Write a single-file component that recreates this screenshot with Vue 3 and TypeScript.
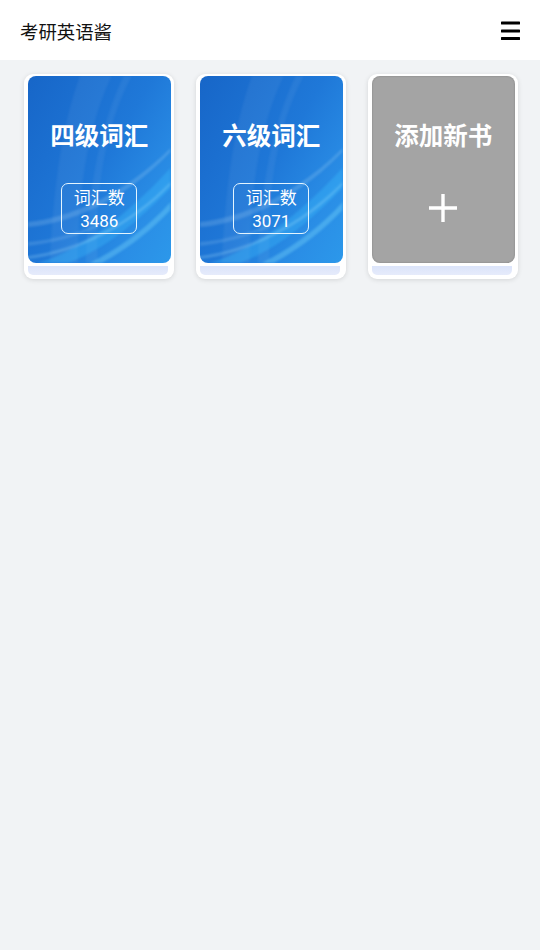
<script setup lang="ts">
const books = [
  { title: '四级词汇', count: 3486 },
  { title: '六级词汇', count: 3071 },
]
</script>

<template>
  <div class="page">
    <header class="bar">
      <span class="brand">考研英语酱</span>
      <svg class="menu" width="19" height="20" viewBox="0 0 19 20">
        <path d="M1 2H18M1 10H18M1 17.5H18" stroke="#000" stroke-width="3.2" stroke-linecap="round" fill="none" />
      </svg>
    </header>
    <main class="shelf">
      <article v-for="b in books" :key="b.title" class="book">
        <div class="cover blue">
          <svg class="streaks" viewBox="0 0 143 187" preserveAspectRatio="none">
            <path d="M52 0C36 45 26 100 22 187H70C66 110 80 45 104 0H96C74 45 60 110 58 187H50C50 110 62 45 84 0Z" fill="#fff" opacity=".05" />
            <path d="M10 187C60 172 108 130 143 92V112C110 146 76 174 40 187Z" fill="#3fc4ff" opacity=".3" />
            <path d="M62 187C92 172 122 150 143 126V134C122 156 98 174 74 187Z" fill="#8ce8ff" opacity=".3" />
            <path d="M0 146C40 142 95 120 143 72V76C95 126 40 148 0 151Z" fill="#dff6ff" opacity=".16" />
            <path d="M0 166C24 164 48 158 70 148V151C48 161 24 167 0 170Z" fill="#dff6ff" opacity=".14" />
            <path d="M0 180C50 174 104 146 143 106V109C104 150 50 177 0 183Z" fill="#bdf0ff" opacity=".22" />
          </svg>
          <h2 class="title">{{ b.title }}</h2>
          <div class="stat">
            <span>词汇数</span>
            <span class="num">{{ b.count }}</span>
          </div>
        </div>
        <div class="edge"></div>
      </article>
      <article class="book">
        <div class="cover grey">
          <h2 class="title">添加新书</h2>
          <svg class="plus" width="30" height="30" viewBox="0 0 30 30">
            <path d="M15 1V29M1 15H29" stroke="#fff" stroke-width="3.4" fill="none" />
          </svg>
        </div>
        <div class="edge"></div>
      </article>
    </main>
  </div>
</template>

<style>
html, body { background: #f1f3f5; }
</style>

<style scoped>
.page {
  height: 950px;
  background: #f1f3f5;
  font-family: "Noto Sans CJK SC", "Noto Sans", sans-serif;
  overflow: hidden;
}
.bar {
  height: 60px;
  background: #fff;
  display: flex;
  align-items: center;
  justify-content: space-between;
  padding: 2px 20px 0;
  box-sizing: border-box;
}
.brand { font-size: 18.4px; color: #111; }
.menu { display: block; }
.shelf {
  display: grid;
  grid-template-columns: repeat(3, 150px);
  gap: 22px;
  padding: 14px 0 0 24px;
}
.book {
  height: 205px;
  box-sizing: border-box;
  background: #fff;
  border-radius: 9px;
  padding: 2px 3.5px 4px 4px;
  box-shadow: 0 1px 5px rgba(0, 0, 0, .12);
  display: flex;
  flex-direction: column;
}
.cover {
  position: relative;
  height: 187px;
  border-radius: 8px;
  display: flex;
  flex-direction: column;
  align-items: center;
  overflow: hidden;
  color: #fff;
}
.blue {
  background: linear-gradient(120deg, #1766c8 0%, #1f78d8 50%, #2a8ee6 80%, #2c98ea 100%);
}
.grey { background: #a4a4a4; box-shadow: inset 0 0 2px rgba(0, 0, 0, .25); }
.streaks {
  position: absolute;
  inset: 0;
  width: 100%;
  height: 100%;
  filter: blur(1px);
}
.title {
  position: relative;
  margin: 42px 0 0;
  font-size: 24.5px;
  line-height: 34px;
  font-weight: 700;
}
.stat {
  position: relative;
  margin-top: 31px;
  width: 76px;
  height: 51px;
  box-sizing: border-box;
  border: 1px solid #e4f5ff;
  border-radius: 7px;
  display: flex;
  flex-direction: column;
  align-items: center;
  justify-content: center;
  font-size: 17px;
  line-height: 24px;
}
.num { font-family: "Roboto", "Noto Sans", sans-serif; }
.plus { margin-top: 41px; display: block; }
.edge {
  margin: 3px 3px 0 0;
  height: 9px;
  border-radius: 0 0 5px 5px;
  background: linear-gradient(#dbe4fa, #e6ebfb);
}
</style>
